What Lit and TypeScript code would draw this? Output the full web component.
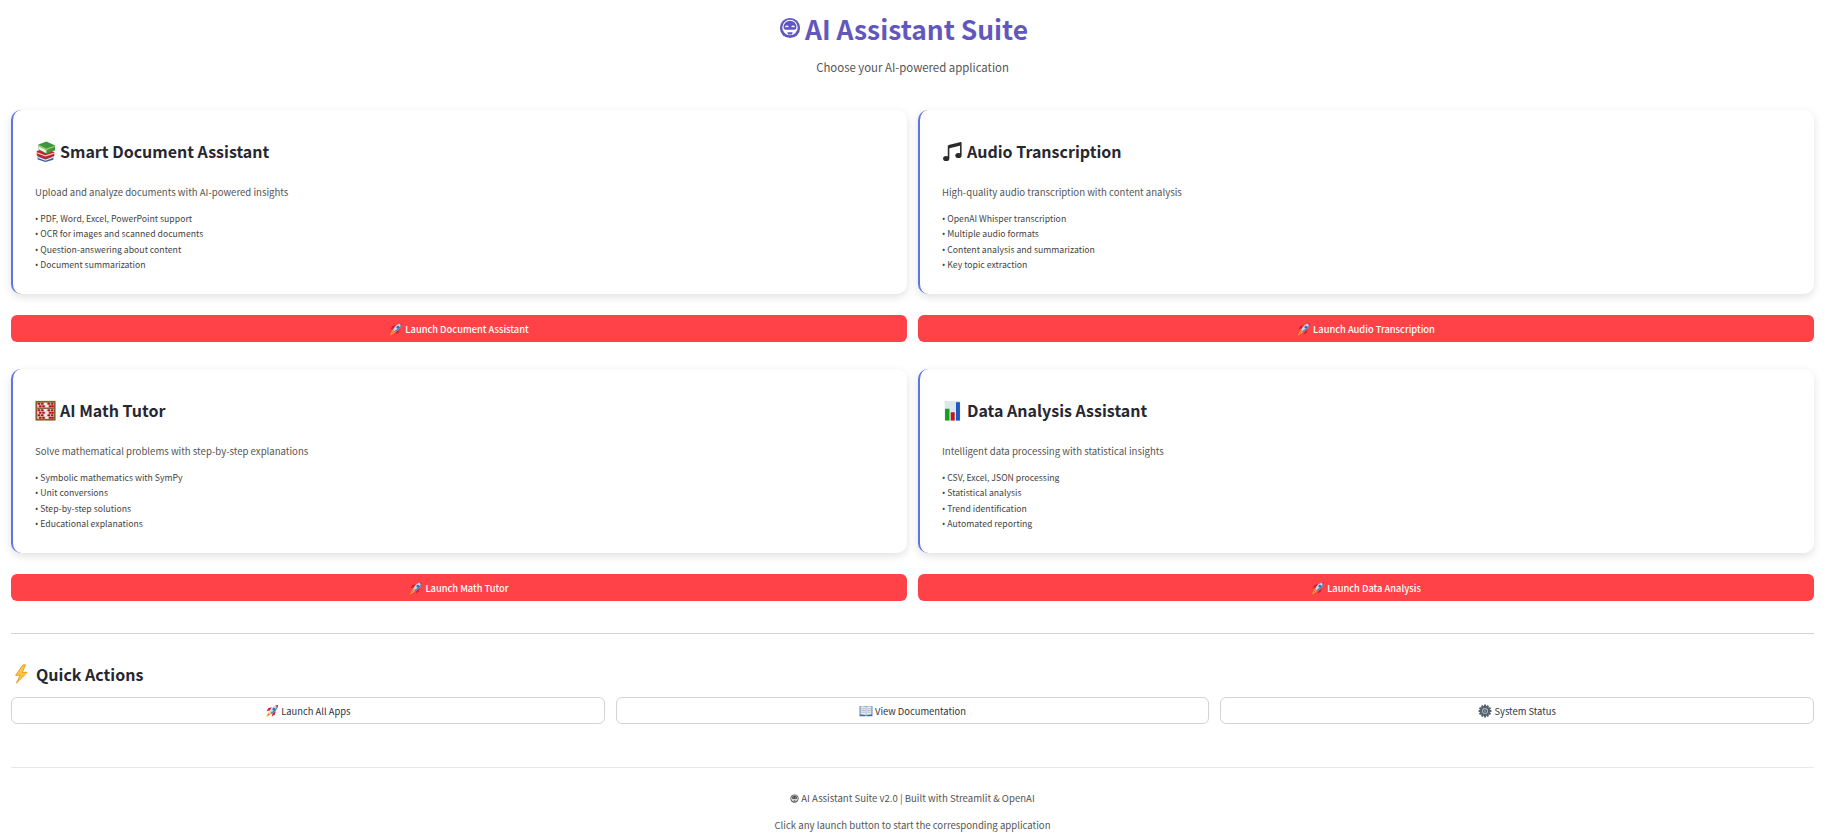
import { LitElement, html, css, svg } from 'lit';
import { customElement } from 'lit/decorators.js';

const icon = (size: number, body: unknown) =>
    html`<svg class="ico" width=${size} height=${size} viewBox="0 0 24 24">${body}</svg>`;

const robot = svg`
    <circle cx="12" cy="12" r="11" fill="currentColor"/>
    <circle cx="12" cy="11.500" r="8.400" fill="#fff"/>
    <path d="M5 11a7 7 0 0 1 14 0c0 2-1 3-2 3H7c-1 0-2-1-2-3z" fill="currentColor"/>
    <path d="M7 11q1.600-2.200 3.200 0M13.800 11q1.600-2.200 3.200 0" fill="none" stroke="#fff" stroke-width="1.200"/>
    <path d="M9 16.500h6l-1 2.500h-4z" fill="currentColor"/>`;

const books = svg`
    <path d="M3 17.500l9-2.500 9 3v3.500L12 24l-9-3z" fill="#3f5f9a"/>
    <path d="M3.500 18l8.500 3 8.500-3v1.500L12 22.500l-8.500-3z" fill="#e4e8f0"/>
    <path d="M2 11.500l9-3 11 4v4.500l-10 3.500-10-4z" fill="#c0242c"/>
    <path d="M2.500 13.500l9.500 3.500 9.500-3" fill="none" stroke="#f0d9c8" stroke-width="1.200"/>
    <path d="M4 4l9-3.500L23 5v5.500L13 14.500 4 10z" fill="#3f9440"/>
    <path d="M4 4l9 4.500 10-3.500v1.500L13 10.500 4 6z" fill="#8ccb62"/>
    <path d="M4 6v3.500l9 4.500V10.500z" fill="#eef2e6"/>`;

const music = svg`
    <path d="M7.500 4.500L21.500 1v4L7.500 8.500z" fill="#2b2b2e"/>
    <path d="M7.500 5v14.500M21.500 1.500V16" stroke="#2b2b2e" stroke-width="1.800"/>
    <ellipse cx="4.800" cy="20" rx="3.600" ry="2.900" fill="#2b2b2e"/>
    <ellipse cx="18.800" cy="16.500" rx="3.600" ry="2.900" fill="#2b2b2e"/>`;

const beadRow = (y: number, xs: number[]) => xs.map(
    (x, i) => svg`<rect x=${x} y=${y} width="3" height="2.300" rx=".8" fill=${i % 3 === 2 ? '#f4f0ea' : '#b3121a'}/>`);
const abacus = svg`
    <rect x="0.500" y="1" width="23" height="22.500" fill="#8a5a2b"/>
    <rect x="2.500" y="3" width="19" height="18.500" fill="#d9cfc4"/>
    <rect x="2.500" y="8.700" width="19" height="1.300" fill="#6e4520"/>
    ${beadRow(3.2, [3, 6.8, 10.5, 14.2, 18])}
    ${beadRow(6, [4.5, 8.2, 12, 15.8, 18.5])}
    ${beadRow(10.6, [3, 6.8, 10.5, 14.2, 18])}
    ${beadRow(13.4, [4.5, 8.2, 12, 15.8, 18.5])}
    ${beadRow(16.2, [3, 6.8, 10.5, 14.2, 18])}
    ${beadRow(19, [4.5, 8.2, 12, 15.8, 18.5])}`;

const chart = svg`
    <rect x="3" y="1" width="18" height="22.500" fill="#dbe7ef"/>
    <rect x="3.500" y="10" width="5" height="13.500" fill="#14a01c"/>
    <rect x="10" y="14" width="4.500" height="9.500" fill="#c4161c"/>
    <rect x="16" y="2.500" width="4.500" height="21" fill="#1f57c3"/>`;

const rocket = svg`
    <path d="M8 11L2.500 12.500 6 7l6-1.500z" fill="#d0202c"/>
    <path d="M13 16l-1.500 5.500L17 18l1.500-6z" fill="#d0202c"/>
    <path d="M7 13.500C9.500 7 15 2.500 22.500 1.500 21.500 9 17 14.500 10.500 17z" fill="#c9d8e8"/>
    <path d="M22.500 1.500C21.500 9 17 14.500 10.500 17L9 15.500C15 12 19.500 7 22.500 1.500z" fill="#5f7ea8"/>
    <path d="M17 2.600c1.800.6 3.800 2.600 4.400 4.400.5-1.800.9-3.600 1.100-5.500-1.900.2-3.700.6-5.500 1.100z" fill="#e02a34"/>
    <circle cx="15.200" cy="8.800" r="2.200" fill="#2f6fc4"/>
    <path d="M6 14l4 4-8.500 5z" fill="#ffc21a"/>
    <path d="M6.500 16l1.500 1.500-4 3z" fill="#f2551b"/>`;

const bolt = svg`
    <path d="M14.500 1L5.500 13.500h5.500L6.500 23l13-13h-6l4-9z" fill="#ffc83d" stroke="#f08a1a" stroke-width="1"/>`;

const book = svg`
    <path d="M1 4h10.500v17H1zM12.500 4H23v17H12.500z" fill="#3f6aa8"/>
    <path d="M2.500 4.500c3-.8 6-.5 9 .8v13.700c-3-1.200-6-1.500-9-.8zM21.500 4.500c-3-.8-6-.5-9 .8v13.700c3-1.200 6-1.500 9-.8z" fill="#e8edf2"/>
    <path d="M4 8h6M4 11h6M4 14h6M14 8h6M14 11h6M14 14h6" stroke="#8c9aad" stroke-width="1"/>`;

const gear = svg`
    <g fill="#55606e">
        <circle cx="12" cy="12" r="8.500"/>
        ${[0, 30, 60, 90, 120, 150, 180, 210, 240, 270, 300, 330].map(
            (a) => svg`<rect x="10.200" y="1" width="3.600" height="5" transform="rotate(${a} 12 12)"/>`)}
    </g>
    <circle cx="12" cy="12" r="5.200" fill="#aeb6c0"/>
    <circle cx="12" cy="12" r="3.200" fill="#3b4552"/>
    <circle cx="12" cy="12" r="1.300" fill="#dfe3e8"/>`;

interface AppInfo {
    glyph: unknown;
    title: string;
    desc: string;
    items: string[];
    action: string;
}

const apps: AppInfo[] = [
    {
        glyph: books,
        title: 'Smart Document Assistant',
        desc: 'Upload and analyze documents with AI-powered insights',
        items: ['PDF, Word, Excel, PowerPoint support', 'OCR for images and scanned documents', 'Question-answering about content', 'Document summarization'],
        action: 'Launch Document Assistant',
    },
    {
        glyph: music,
        title: 'Audio Transcription',
        desc: 'High-quality audio transcription with content analysis',
        items: ['OpenAI Whisper transcription', 'Multiple audio formats', 'Content analysis and summarization', 'Key topic extraction'],
        action: 'Launch Audio Transcription',
    },
    {
        glyph: abacus,
        title: 'AI Math Tutor',
        desc: 'Solve mathematical problems with step-by-step explanations',
        items: ['Symbolic mathematics with SymPy', 'Unit conversions', 'Step-by-step solutions', 'Educational explanations'],
        action: 'Launch Math Tutor',
    },
    {
        glyph: chart,
        title: 'Data Analysis Assistant',
        desc: 'Intelligent data processing with statistical insights',
        items: ['CSV, Excel, JSON processing', 'Statistical analysis', 'Trend identification', 'Automated reporting'],
        action: 'Launch Data Analysis',
    },
];

@customElement('app-root')
export class AppRoot extends LitElement {
    static styles = css`
        :host {
            display: block;
            background: #fff;
            color: #31333f;
            font-family: "Noto Sans CJK SC", "Noto Sans", sans-serif;
        }
        .page {
            padding: 6px 21px 0 11px;
        }
        .ico {
            display: block;
            flex: none;
        }
        h1 {
            margin: 0;
            padding-right: 18px;
            display: flex;
            justify-content: center;
            align-items: center;
            gap: 4px;
            height: 44px;
            font-size: 26.400px;
            font-weight: 700;
            color: #6257be;
        }
        .sub {
            margin: 7px 0 33px;
            text-align: center;
            font-size: 11.400px;
            line-height: 20px;
            color: #555;
        }
        .apps {
            display: grid;
            grid-template-columns: 1fr 1fr;
            gap: 27px 11px;
        }
        .card {
            box-sizing: border-box;
            height: 184px;
            padding: 27px 22px 0 22px;
            background: #fff;
            border-left: 2px solid #5f75e5;
            border-radius: 10px;
            box-shadow: 0 3px 8px rgba(0, 0, 0, 0.12);
        }
        .card h3 {
            margin: 0;
            display: flex;
            align-items: center;
            gap: 4px;
            height: 28px;
            font-size: 16px;
            font-weight: 600;
            color: #262730;
        }
        .desc {
            margin: 19px 0 0;
            font-size: 9.600px;
            line-height: 16px;
            color: #555;
        }
        ul {
            list-style: none;
            margin: 11px 0 0;
            padding: 0;
            font-size: 8.700px;
            line-height: 15.400px;
            color: #444;
        }
        li {
            height: 15.400px;
        }
        .dot {
            font-family: "Noto Sans", sans-serif;
            line-height: 0;
            margin-right: 2px;
        }
        .launch {
            display: flex;
            justify-content: center;
            align-items: center;
            gap: 2px;
            box-sizing: border-box;
            width: 100%;
            height: 27px;
            margin-top: 21px;
            border: 0;
            border-radius: 6px;
            background: #ff4248;
            color: #fff;
            font: inherit;
            font-size: 9.300px;
            font-weight: 500;
        }
        hr {
            margin: 32px 0 25px;
            border: 0;
            border-top: 1px solid #d3d3d6;
        }
        .quick-title {
            margin: 0;
            display: flex;
            align-items: center;
            gap: 5px;
            height: 30px;
            font-size: 16px;
            font-weight: 600;
            color: #262730;
        }
        .quick {
            display: grid;
            grid-template-columns: repeat(3, 1fr);
            gap: 11px;
            margin-top: 8px;
        }
        .quick button {
            display: flex;
            justify-content: center;
            align-items: center;
            gap: 2px;
            box-sizing: border-box;
            height: 27px;
            border: 1px solid #d2d3d6;
            border-radius: 6px;
            background: #fff;
            color: #31333f;
            font: inherit;
            font-size: 9.400px;
        }
        .foot {
            margin-top: 43px;
            border-top: 1px solid #e8e8ea;
            padding-top: 22px;
            text-align: center;
            font-size: 9.600px;
            line-height: 16px;
            color: #555;
        }
        .foot p {
            margin: 0 0 11px;
            display: flex;
            justify-content: center;
            align-items: center;
            gap: 2px;
        }
    `;

    private renderApp(app: AppInfo) {
        return html`
            <div>
                <div class="card">
                    <h3>${icon(21, app.glyph)}${app.title}</h3>
                    <p class="desc">${app.desc}</p>
                    <ul>${app.items.map((item) => html`<li><span class="dot">•</span>${item}</li>`)}</ul>
                </div>
                <button class="launch">${icon(14, rocket)}${app.action}</button>
            </div>
        `;
    }

    render() {
        return html`
            <div class="page">
                <h1>${icon(22, robot)}AI Assistant Suite</h1>
                <p class="sub">Choose your AI-powered application</p>
                <div class="apps">${apps.map((app) => this.renderApp(app))}</div>
                <hr />
                <h3 class="quick-title">${icon(20, bolt)}Quick Actions</h3>
                <div class="quick">
                    <button>${icon(14, rocket)}Launch All Apps</button>
                    <button>${icon(14, book)}View Documentation</button>
                    <button>${icon(14, gear)}System Status</button>
                </div>
                <div class="foot">
                    <p>${icon(9, robot)}AI Assistant Suite v2.0 | Built with Streamlit &amp; OpenAI</p>
                    <p>Click any launch button to start the corresponding application</p>
                </div>
            </div>
        `;
    }
}
